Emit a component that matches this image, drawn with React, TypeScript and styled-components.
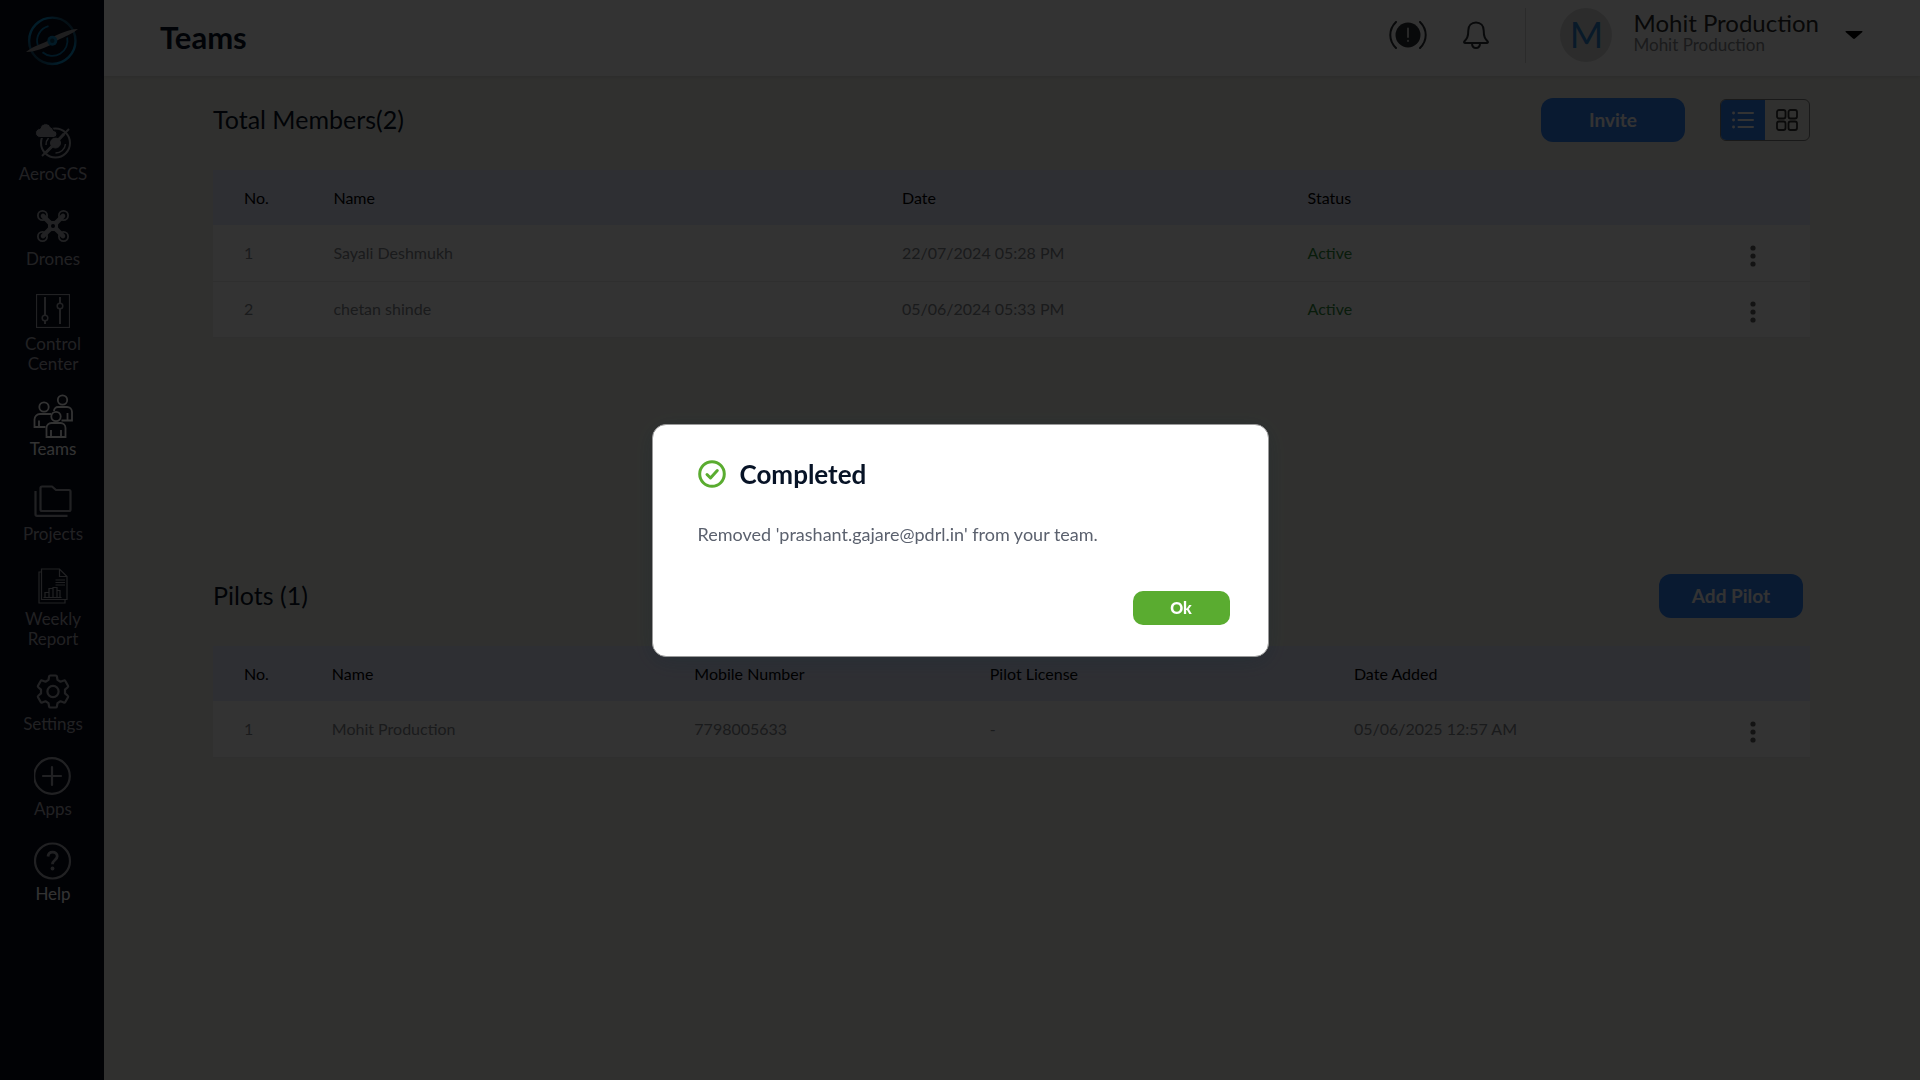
import React from "react";
import styled, { createGlobalStyle } from "styled-components";

const GlobalStyle = createGlobalStyle`
  *, *::before, *::after { box-sizing: border-box; }
  body { margin: 0; font-family: Lato, "Open Sans", sans-serif; background: #f1f1ea; }
  h1, h2, p { margin: 0; }
  button { font-family: inherit; border: 0; padding: 0; background: none; cursor: pointer; }
  svg { display: block; }
`;

const Shell = styled.div`
  display: flex;
  min-height: 100vh;
`;

const Sidebar = styled.nav`
  flex: none;
  width: 104px;
  background: #050a1c;
  display: flex;
  flex-direction: column;
  align-items: center;
  padding-top: 15px;
`;

const Logo = styled.a`
  margin-bottom: 52px;
`;

const NavList = styled.ul`
  list-style: none;
  margin: 0;
  padding: 0 0 0 2px;
  display: flex;
  flex-direction: column;
  gap: 20px;
`;

const NavLink = styled.a<{ $active?: boolean }>`
  display: flex;
  flex-direction: column;
  align-items: center;
  gap: 1px;
  width: 76px;
  font-size: 17px;
  line-height: 20px;
  text-align: center;
  text-decoration: none;
  color: ${(p) => (p.$active ? "#ffffff" : "#a5a7ad")};
`;

const NavIcon = styled.span`
  height: 44px;
  display: flex;
  align-items: center;
  justify-content: center;
`;

const Page = styled.div`
  flex: 1;
  min-width: 0;
  display: flex;
  flex-direction: column;
`;

const Header = styled.header`
  height: 76px;
  display: flex;
  align-items: center;
  justify-content: space-between;
  padding: 0 57px 2px 56px;
  background: #ffffff;
  box-shadow: 0 1px 4px rgba(0, 0, 0, 0.12);
`;

const Title = styled.h1`
  font-size: 31px;
  line-height: 36px;
  font-weight: 700;
  color: #071326;
`;

const HeaderTools = styled.div`
  display: flex;
  align-items: center;
  height: 70px;
  align-self: flex-start;
`;

const IconButton = styled.button`
  display: flex;
  align-items: center;
  justify-content: center;
  margin-right: 36px;
`;

const Divider = styled.span`
  width: 1px;
  height: 55px;
  background: #d5d5d5;
  margin-right: 34px;
`;

const Avatar = styled.span`
  width: 52px;
  height: 54px;
  border-radius: 50%;
  background: #dcdddd;
  color: #2f80cc;
  font-size: 36px;
  line-height: 52px;
  text-align: center;
`;

const Account = styled.button`
  display: flex;
  align-items: center;
  text-align: left;
`;

const AccountText = styled.span`
  display: flex;
  flex-direction: column;
  margin: 0 26px 0 21px;
  padding-bottom: 4px;
`;

const AccountName = styled.span`
  font-size: 24px;
  line-height: 24px;
  color: #2a2a2a;
`;

const AccountOrg = styled.span`
  font-size: 17px;
  line-height: 20px;
  color: #85888c;
`;

const Content = styled.main`
  padding: 22px 110px 40px 109px;
`;

const Section = styled.section<{ $tall?: boolean }>`
  min-height: ${(p) => (p.$tall ? "476px" : "0")};
`;

const SectionHead = styled.div<{ $inset?: boolean }>`
  display: flex;
  align-items: center;
  justify-content: space-between;
  margin-bottom: 28px;
  padding-right: ${(p) => (p.$inset ? "7px" : "0")};
`;

const SectionTitle = styled.h2`
  font-size: 25px;
  line-height: 32px;
  padding-bottom: 2px;
  font-weight: 400;
  color: #071326;
`;

const Actions = styled.div`
  display: flex;
  align-items: center;
  gap: 35px;
`;

const PrimaryButton = styled.button`
  width: 144px;
  height: 44px;
  padding-bottom: 2px;
  border-radius: 12px;
  background: #2f80f5;
  color: #ffffff;
  font-size: 19px;
  font-weight: 700;
`;

const ViewToggle = styled.div`
  display: flex;
  width: 90px;
  height: 42px;
  border: 1px solid #7c7c7c;
  border-radius: 6px;
  overflow: hidden;
`;

const ViewButton = styled.button<{ $on?: boolean }>`
  flex: 1;
  display: flex;
  align-items: center;
  justify-content: center;
  background: ${(p) => (p.$on ? "#2f80f5" : "transparent")};
`;

const Table = styled.table`
  width: 100%;
  table-layout: fixed;
  border-collapse: collapse;
  background: #ffffff;
  font-size: 16px;
  line-height: 20px;
  color: #83868c;
`;

const Th = styled.th`
  height: 55px;
  padding: 0 0 0 31px;
  background: #e7eaff;
  color: #000000;
  font-weight: 400;
  text-align: left;
`;

const Td = styled.td<{ $good?: boolean }>`
  height: 56px;
  padding: 0 0 0 31px;
  border-bottom: 1px solid #ececec;
  color: ${(p) => (p.$good ? "#2f8a3a" : "inherit")};
`;

const Col = styled.col<{ $w?: string }>`
  width: ${(p) => p.$w ?? "auto"};
`;

const MenuButton = styled.button`
  display: flex;
  align-items: center;
  justify-content: center;
  width: 24px;
  height: 28px;
  margin: 6px 45px 0 auto;
`;

const Backdrop = styled.div`
  position: fixed;
  inset: 0;
  display: flex;
  align-items: center;
  justify-content: center;
  background: rgba(0, 0, 0, 0.8);
`;

const Dialog = styled.div`
  width: 617px;
  max-width: 90vw;
  padding: 33px 38px 31px 45px;
  border: 1px solid #9a9a9a;
  border-radius: 14px;
  background: #ffffff;
  box-shadow: 0 4px 24px rgba(13, 41, 54, 0.25);
`;

const DialogHead = styled.div`
  display: flex;
  align-items: center;
  gap: 14px;
`;

const DialogTitle = styled.h2`
  font-size: 26px;
  line-height: 32px;
  font-weight: 700;
  color: #071326;
`;

const DialogText = styled.p`
  margin-top: 32px;
  font-size: 18px;
  line-height: 24px;
  color: #5b616e;
`;

const DialogFoot = styled.div`
  display: flex;
  justify-content: flex-end;
  margin-top: 45px;
`;

const OkButton = styled.button`
  width: 97px;
  height: 34px;
  border-radius: 10px;
  background: #5aac30;
  color: #ffffff;
  font-size: 16px;
  font-weight: 900;
`;

const LogoMark = () => (
  <svg width="54" height="52" viewBox="0 0 54 52" fill="none">
    <defs>
      <linearGradient id="ring" x1="6" y1="46" x2="48" y2="6" gradientUnits="userSpaceOnUse">
        <stop offset="0" stopColor="#1c2a38" />
        <stop offset="0.3" stopColor="#0b8fce" />
        <stop offset="0.7" stopColor="#0b8fce" />
        <stop offset="1" stopColor="#1c2a38" />
      </linearGradient>
    </defs>
    <circle cx="27.3" cy="25.800" r="23.200" stroke="url(#ring)" strokeWidth="2.400" />
    <path d="M23.500 11.200A15.200 15.200 0 0 0 12.800 30.500" stroke="#087bb3" strokeWidth="1.800" />
    <path d="M17.500 37.300A15.200 15.200 0 0 0 42.200 22.500" stroke="#087bb3" strokeWidth="1.800" />
    <path d="M1 37C6 32.500 14 30 22.500 26L29 28.500C20 32.500 11 37 1 37Z" fill="#96979a" />
    <path d="M53 14C48 18.500 40 21.500 32 25.500L25.500 23C34 19 43 14.500 53 14Z" fill="#96979a" />
    <circle cx="27.3" cy="25.800" r="5" fill="#0b84bd" />
    <circle cx="27.3" cy="25.800" r="2.200" fill="#07405e" />
  </svg>
);

const AeroIcon = () => (
  <svg width="38" height="36" viewBox="0 0 38 36" fill="none" stroke="#a5a7ad">
    <circle cx="21.5" cy="20" r="14.5" strokeWidth="2" />
    <path d="M8 33 35 6" strokeWidth="2" />
    <path d="m12 29.500 9-9M22 19.500l8-8.500" strokeWidth="3" />
    <circle cx="21.5" cy="20" r="5" fill="#a5a7ad" />
    <path d="M21.500 30a10 10 0 0 0 10-9M12 22a10 10 0 0 1 2.500-7" strokeWidth="1.500" />
    <path d="M6 14.500a4.500 4.500 0 0 1 0-9 5.500 5.500 0 0 1 10.500-1.500 4 4 0 0 1 3 3.500 3.500 3.500 0 0 1 0 7Z" fill="#a5a7ad" stroke="#050a1c" />
  </svg>
);

const DroneIcon = () => (
  <svg width="34" height="34" viewBox="0 0 34 34" fill="none" stroke="#a5a7ad">
    <circle cx="6.500" cy="6.500" r="4.600" strokeWidth="1.800" />
    <circle cx="27.500" cy="6.500" r="4.600" strokeWidth="1.800" />
    <circle cx="6.500" cy="27.500" r="4.600" strokeWidth="1.800" />
    <circle cx="27.500" cy="27.500" r="4.600" strokeWidth="1.800" />
    <path d="m7 7 20 20m0-20L7 27" strokeWidth="4.600" strokeLinecap="round" />
    <path d="M11 11c4 2 8 2 12 0-2 4-2 8 0 12-4-2-8-2-12 0 2-4 2-8 0-12Z" fill="#a5a7ad" strokeWidth="1" />
    <circle cx="17" cy="17" r="2" fill="#050a1c" stroke="none" />
  </svg>
);

const ControlIcon = () => (
  <svg width="34" height="34" viewBox="0 0 34 34" fill="none" stroke="#a5a7ad">
    <rect x="0.500" y="0.500" width="33" height="33" strokeWidth="1.200" />
    <path d="M9 3v18M9 27v3M24 3v6M24 15v15" strokeWidth="2" />
    <circle cx="9" cy="24" r="2.800" strokeWidth="1.500" />
    <circle cx="24" cy="12" r="2.800" strokeWidth="1.500" />
  </svg>
);

const TeamsIcon = () => (
  <svg width="40" height="44" viewBox="0 0 40 44" fill="none" stroke="#ffffff" strokeWidth="1.800">
    <circle cx="29.500" cy="6" r="4.700" />
    <circle cx="11" cy="13" r="4.700" />
    <circle cx="23" cy="22.500" r="4.700" />
    <path d="M21 17v-.2a4 4 0 0 1 4-3.800h9a5 5 0 0 1 5 5v8.500H28.500M34.500 19v7" />
    <path d="M18 20H7a5.500 5.500 0 0 0-5.500 5.500V33H12.500M6 26.500V33" />
    <path d="M13.500 43V34a5 5 0 0 1 5-5h9a5 5 0 0 1 5 5v9ZM18 36v7M28 36v7" />
  </svg>
);

const ProjectsIcon = () => (
  <svg width="38" height="32" viewBox="0 0 38 32" fill="none" stroke="#a5a7ad" strokeWidth="2.200" strokeLinejoin="round">
    <path d="M6.500 3A1.500 1.500 0 0 1 8 1.500h10l4 3.500h13A1.500 1.500 0 0 1 36.500 6.500v18A1.500 1.500 0 0 1 35 26H8a1.500 1.500 0 0 1-1.500-1.500Z" />
    <path d="M1.500 6v23.300a1.500 1.500 0 0 0 1.500 1.500h30.500" />
  </svg>
);

const ReportIcon = () => (
  <svg width="30" height="36" viewBox="0 0 30 36" fill="none" stroke="#a5a7ad" strokeWidth="1.200">
    <path d="M3.500 1h18l7.500 7.500V31.500H3.500ZM21.500 1v7.500H29" />
    <path d="M3.500 4H1v31h26v-3.500" />
    <path d="M5.500 29.500h18M7 29.500v-5h4v5M11 24.500v-4h4v9M15 20.500v-1h4v10M19 22.500h3v7M17.500 12H27M17.500 14.500H27M17.500 17H27" />
  </svg>
);

const GearIcon = () => (
  <svg width="34" height="35" viewBox="0 0 34 35" fill="none" stroke="#a5a7ad" strokeWidth="2.200" strokeLinejoin="round">
    <path d="M14.300 1.500h5.400a1.200 1.200 0 0 1 1.200 1l.6 3.400 3 1.800 3.300-1.200a1.200 1.200 0 0 1 1.500.5l2.700 4.700a1.200 1.200 0 0 1-.3 1.500l-2.700 2.400v3.800l2.700 2.400a1.200 1.200 0 0 1 .3 1.500L29.300 28a1.200 1.200 0 0 1-1.500.5l-3.300-1.200-3 1.800-.6 3.400a1.200 1.200 0 0 1-1.200 1h-5.400a1.200 1.200 0 0 1-1.200-1l-.6-3.400-3-1.800-3.300 1.200a1.200 1.200 0 0 1-1.500-.5L2 23.300a1.200 1.200 0 0 1 .3-1.500L5 19.400v-3.800l-2.700-2.400a1.200 1.200 0 0 1-.3-1.500L4.700 7a1.200 1.200 0 0 1 1.500-.5l3.300 1.200 3-1.800.6-3.400a1.200 1.200 0 0 1 1.200-1Z" />
    <circle cx="17" cy="17.500" r="5.600" />
  </svg>
);

const PlusIcon = () => (
  <svg width="38" height="40" viewBox="0 0 38 40" fill="none" stroke="#a5a7ad" strokeWidth="2.200" strokeLinecap="round">
    <circle cx="18" cy="20" r="17.800" />
    <path d="M9 20h18M18 11v18" />
  </svg>
);

const HelpIcon = () => (
  <svg width="38" height="38" viewBox="0 0 38 38" fill="none" stroke="#a5a7ad" strokeWidth="2.200">
    <circle cx="18.500" cy="19" r="17.500" />
    <path d="M14 14.500c.3-3 2.200-4.300 4.600-4.300 2.700 0 4.600 1.600 4.600 4 0 3.800-4.700 3.800-4.700 8" strokeWidth="2.800" />
    <circle cx="18.500" cy="26.500" r="1.900" fill="#a5a7ad" stroke="none" />
  </svg>
);

const AlertIcon = () => (
  <svg width="38" height="28" viewBox="0 0 38 28" fill="none" stroke="#2b2e33" strokeWidth="2" strokeLinecap="round">
    <circle cx="19" cy="14" r="12.500" fill="#2b2e33" stroke="none" />
    <path d="M7 1C-.6 8.500-.6 19.500 7 27M31 1c7.600 7.500 7.600 18.500 0 26" />
    <path d="M19 7.500v8.500M19 19.800v.2" stroke="#c8c8c8" strokeWidth="2" />
  </svg>
);

const BellIcon = () => (
  <svg width="26" height="28" viewBox="0 0 26 28" fill="none" stroke="#2b2e33" strokeWidth="2" strokeLinejoin="round">
    <path d="M13 1.500c-4.600 0-7.700 3.200-7.700 8 0 7-1.800 8.500-4 11-.5.700-.1 1.500.8 1.500h21.800c.9 0 1.300-.8.800-1.500-2.200-2.500-4-4-4-11 0-4.800-3.100-8-7.700-8Z" />
    <path d="M9 22c0 3.500 1.500 5 4 5s4-1.500 4-5" />
  </svg>
);

const CaretIcon = () => (
  <svg width="18" height="8" viewBox="0 0 18 8">
    <path d="M1 0h16a.6.6 0 0 1 .4 1L10 7.500a1.500 1.500 0 0 1-2 0L.6 1A.6.6 0 0 1 1 0Z" fill="#000" />
  </svg>
);

const ListIcon = () => (
  <svg width="22" height="18" viewBox="0 0 22 18" stroke="#fff" strokeWidth="2" strokeLinecap="round">
    <path d="M6.500 2H21M6.500 9H21M6.500 16H21" />
    <path d="M1.500 2h.1M1.500 9h.1M1.500 16h.1" strokeWidth="2.800" />
  </svg>
);

const GridIcon = () => (
  <svg width="22" height="22" viewBox="0 0 22 22" fill="none" stroke="#333" strokeWidth="1.800">
    <rect x="1" y="1" width="8.500" height="8.500" rx="2" />
    <rect x="12.500" y="1" width="8.500" height="8.500" rx="2" />
    <rect x="1" y="12.500" width="8.500" height="8.500" rx="2" />
    <rect x="12.500" y="12.500" width="8.500" height="8.500" rx="2" />
  </svg>
);

const DotsIcon = () => (
  <svg width="6" height="22" viewBox="0 0 6 22" fill="#5e5e5e">
    <circle cx="3" cy="3" r="2.600" />
    <circle cx="3" cy="11" r="2.600" />
    <circle cx="3" cy="19" r="2.600" />
  </svg>
);

const CheckIcon = () => (
  <svg width="28" height="28" viewBox="0 0 28 28" fill="none" stroke="#5aac30" strokeWidth="3">
    <circle cx="14" cy="14" r="12.300" />
    <path d="m9 14.500 3.500 3.500L19.300 10.500" strokeLinecap="round" strokeLinejoin="round" />
  </svg>
);

const navItems = [
  { label: "AeroGCS", Icon: AeroIcon },
  { label: "Drones", Icon: DroneIcon },
  { label: "Control Center", Icon: ControlIcon },
  { label: "Teams", Icon: TeamsIcon, active: true },
  { label: "Projects", Icon: ProjectsIcon },
  { label: "Weekly Report", Icon: ReportIcon },
  { label: "Settings", Icon: GearIcon },
  { label: "Apps", Icon: PlusIcon },
  { label: "Help", Icon: HelpIcon, active: true },
];

const members = [
  ["1", "Sayali Deshmukh", "22/07/2024 05:28 PM", "Active"],
  ["2", "chetan shinde", "05/06/2024 05:33 PM", "Active"],
];

const pilots = [["1", "Mohit Production", "7798005633", "-", "05/06/2025 12:57 AM"]];

type DataTableProps = { label: string; columns: string[]; widths: string[]; rows: string[][] };

const DataTable = ({ label, columns, widths, rows }: DataTableProps) => (
  <Table aria-label={label}>
    <colgroup>
      {widths.map((w, i) => (
        <Col key={i} $w={w} />
      ))}
      <Col />
    </colgroup>
    <thead>
      <tr>
        {columns.map((c) => (
          <Th key={c} scope="col">{c}</Th>
        ))}
        <Th as="td" />
      </tr>
    </thead>
    <tbody>
      {rows.map((row) => (
        <tr key={row[0]}>
          {row.map((cell, i) => (
            <Td key={i} $good={cell === "Active"}>{cell}</Td>
          ))}
          <Td>
            <MenuButton aria-label={`Options for ${row[1]}`}>
              <DotsIcon />
            </MenuButton>
          </Td>
        </tr>
      ))}
    </tbody>
  </Table>
);

export default function App() {
  const [open, setOpen] = React.useState(true);
  return (
    <>
      <GlobalStyle />
      <Shell>
        <Sidebar>
          <Logo href="#" aria-label="Home">
            <LogoMark />
          </Logo>
          <NavList>
            {navItems.map(({ label, Icon, active }) => (
              <li key={label}>
                <NavLink href="#" $active={active}>
                  <NavIcon>
                    <Icon />
                  </NavIcon>
                  {label}
                </NavLink>
              </li>
            ))}
          </NavList>
        </Sidebar>
        <Page>
          <Header>
            <Title>Teams</Title>
            <HeaderTools>
              <IconButton aria-label="Alerts">
                <AlertIcon />
              </IconButton>
              <IconButton aria-label="Notifications">
                <BellIcon />
              </IconButton>
              <Divider />
              <Account>
                <Avatar>M</Avatar>
                <AccountText>
                  <AccountName>Mohit Production</AccountName>
                  <AccountOrg>Mohit Production</AccountOrg>
                </AccountText>
                <CaretIcon />
              </Account>
            </HeaderTools>
          </Header>
          <Content>
            <Section $tall>
              <SectionHead>
                <SectionTitle>Total Members(2)</SectionTitle>
                <Actions>
                  <PrimaryButton>Invite</PrimaryButton>
                  <ViewToggle>
                    <ViewButton $on aria-label="List view">
                      <ListIcon />
                    </ViewButton>
                    <ViewButton aria-label="Grid view">
                      <GridIcon />
                    </ViewButton>
                  </ViewToggle>
                </Actions>
              </SectionHead>
              <DataTable
                label="Members"
                columns={["No.", "Name", "Date", "Status"]}
                widths={["5.6%", "35.6%", "25.4%", "22%"]}
                rows={members}
              />
            </Section>
            <Section>
              <SectionHead $inset>
                <SectionTitle>Pilots (1)</SectionTitle>
                <PrimaryButton>Add Pilot</PrimaryButton>
              </SectionHead>
              <DataTable
                label="Pilots"
                columns={["No.", "Name", "Mobile Number", "Pilot License", "Date Added"]}
                widths={["5.5%", "22.7%", "18.5%", "22.8%", "20%"]}
                rows={pilots}
              />
            </Section>
          </Content>
        </Page>
      </Shell>
      {open && (
        <Backdrop>
          <Dialog role="dialog" aria-modal="true" aria-labelledby="dialog-title">
            <DialogHead>
              <CheckIcon />
              <DialogTitle id="dialog-title">Completed</DialogTitle>
            </DialogHead>
            <DialogText>Removed 'prashant.gajare@pdrl.in' from your team.</DialogText>
            <DialogFoot>
              <OkButton onClick={() => setOpen(false)}>Ok</OkButton>
            </DialogFoot>
          </Dialog>
        </Backdrop>
      )}
    </>
  );
}
